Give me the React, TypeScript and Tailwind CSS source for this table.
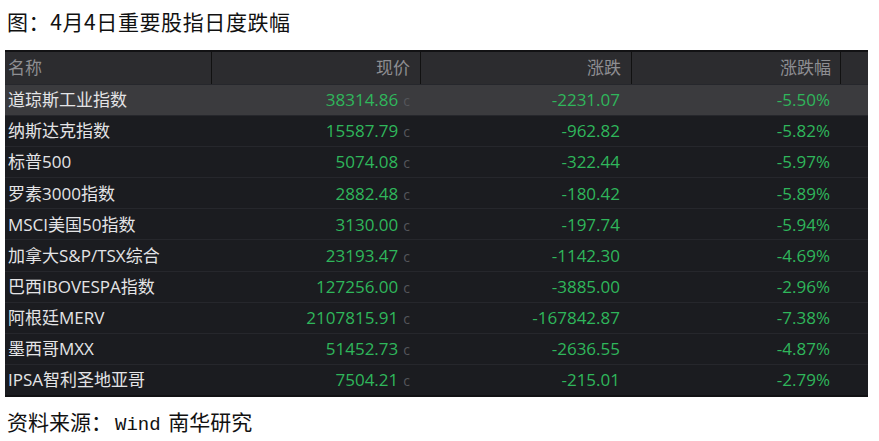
import React from 'react';

type Row = { name: string; price: string; change: string; pct: string };

const rows: Row[] = [
  { name: '道琼斯工业指数', price: '38314.86', change: '-2231.07', pct: '-5.50%' },
  { name: '纳斯达克指数', price: '15587.79', change: '-962.82', pct: '-5.82%' },
  { name: '标普500', price: '5074.08', change: '-322.44', pct: '-5.97%' },
  { name: '罗素3000指数', price: '2882.48', change: '-180.42', pct: '-5.89%' },
  { name: 'MSCI美国50指数', price: '3130.00', change: '-197.74', pct: '-5.94%' },
  { name: '加拿大S&P/TSX综合', price: '23193.47', change: '-1142.30', pct: '-4.69%' },
  { name: '巴西IBOVESPA指数', price: '127256.00', change: '-3885.00', pct: '-2.96%' },
  { name: '阿根廷MERV', price: '2107815.91', change: '-167842.87', pct: '-7.38%' },
  { name: '墨西哥MXX', price: '51452.73', change: '-2636.55', pct: '-4.87%' },
  { name: 'IPSA智利圣地亚哥', price: '7504.21', change: '-215.01', pct: '-2.79%' },
];

const cols = 'grid grid-cols-[207px_209px_211px_209px_27px]';

export default function App() {
  return (
    <div className="w-[879px] h-[441px] bg-white font-['Noto_Sans_CJK_SC',sans-serif]">
      <div className="h-[44px] flex items-center pl-[7px] text-[21px] text-[#111] tracking-[0.6px]">
        图：4月4日重要股指日度跌幅
      </div>

      <div className="mt-[6px] ml-[5px] w-[863px] bg-[#1b1c20] border-t-2 border-b-2 border-[#121214] font-['Open_Sans','Noto_Sans_CJK_SC',sans-serif] text-[17px]">
        {/* header */}
        <div className={`${cols} h-[32px] bg-[#2c2c2f] text-[#8e8e92]`}>
          <div className="flex items-center pl-[3px] border-r border-[#111]">名称</div>
          <div className="flex items-center justify-end pr-[10px] border-r border-[#111]">现价</div>
          <div className="flex items-center justify-end pr-[10px] border-r border-[#111]">涨跌</div>
          <div className="flex items-center justify-end pr-[9px] border-r border-[#111]">涨跌幅</div>
          <div />
        </div>

        {rows.map((r, i) => (
          <div
            key={r.name}
            className={`${cols} h-[31.1px] border-t border-[#26272c] ${i === 0 ? 'bg-[#3b3b3e]' : ''}`}
          >
            <div className="flex items-center pl-[3px] text-[#e4e4e6]">{r.name}</div>
            <div className="flex items-center justify-end pr-[11px] text-[#2fb65b]">
              <span>
                {r.price}
                <span className="ml-[5px] text-[14px] text-[#55565b]">c</span>
              </span>
            </div>
            <div className="flex items-center justify-end pr-[12px] text-[#2fb65b]">{r.change}</div>
            <div className="flex items-center justify-end pr-[11px] text-[#2fb65b]">{r.pct}</div>
            <div />
          </div>
        ))}
      </div>

      <div className="h-[52px] flex items-center pl-[7px] text-[21px] text-[#111]">
        <span>
          资料来源：<span className="font-['Liberation_Mono',monospace] text-[19px] mx-[3px]">Wind</span>&nbsp;南华研究
        </span>
      </div>
    </div>
  );
}
